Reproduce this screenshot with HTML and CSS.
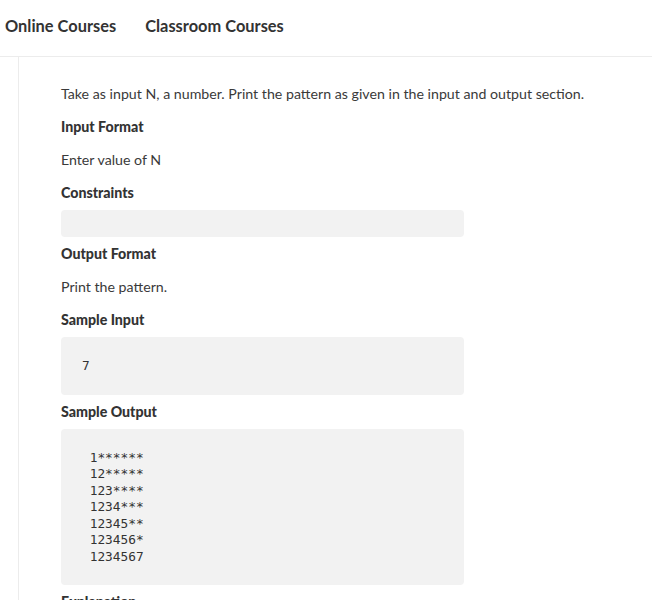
FILE: index.html
```html
<!DOCTYPE html>
<html>
<head>
<meta charset="utf-8">
<link rel="stylesheet" href="styles.css">
</head>
<body>
<header class="topbar">
  <nav class="nav">
    <a class="nav-link">Online Courses</a>
    <a class="nav-link">Classroom Courses</a>
  </nav>
</header>
<div class="page">
  <main class="problem">
    <p class="text">Take as input N, a number. Print the pattern as given in the input and output section.</p>
    <h4 class="label">Input Format</h4>
    <p class="text">Enter value of N</p>
    <h4 class="label tight">Constraints</h4>
    <div class="box empty"></div>
    <h4 class="label">Output Format</h4>
    <p class="text">Print the pattern.</p>
    <h4 class="label tight">Sample Input</h4>
    <pre class="box code">7</pre>
    <h4 class="label tight">Sample Output</h4>
    <pre class="box code"> 1******
 12*****
 123****
 1234***
 12345**
 123456*
 1234567</pre>
    <h4 class="label">Explanation</h4>
  </main>
</div>
</body>
</html>
```
FILE: styles.css
```css
html, body {
  margin: 0;
  padding: 0;
  background: #fff;
}
body {
  font-family: Lato, "Open Sans", sans-serif;
  color: #333;
  overflow: hidden;
  height: 600px;
}
.topbar {
  height: 56px;
  border-bottom: 1px solid #ececec;
  display: flex;
  align-items: center;
}
.nav {
  display: flex;
  gap: 29px;
  padding: 0 0 6px 5px;
}
.nav-link {
  font-size: 16.4px;
  font-weight: 700;
  color: #333;
}
.page {
  margin-left: 18px;
  border-left: 1px solid #ececec;
  min-height: 600px;
}
.problem {
  display: flex;
  flex-direction: column;
  align-items: flex-start;
  padding: 27px 0 0 42px;
  width: 403px;
}
.text {
  margin: 0 0 13px;
  font-size: 14.2px;
  line-height: 20px;
  white-space: nowrap;
  color: #3a3a3a;
}
.label {
  margin: 0 0 13px;
  font-size: 14.2px;
  line-height: 20px;
  font-weight: 900;
  color: #333;
}
.label.tight {
  margin-bottom: 7px;
}
.box {
  align-self: stretch;
  background: #f2f2f2;
  border-radius: 4px;
  margin: 0 0 7px;
}
.empty {
  height: 27px;
}
.code {
  padding: 21px 21px 20px;
  font-family: "DejaVu Sans Mono", monospace;
  font-size: 12.8px;
  line-height: 16.5px;
  color: #333;
}
```
